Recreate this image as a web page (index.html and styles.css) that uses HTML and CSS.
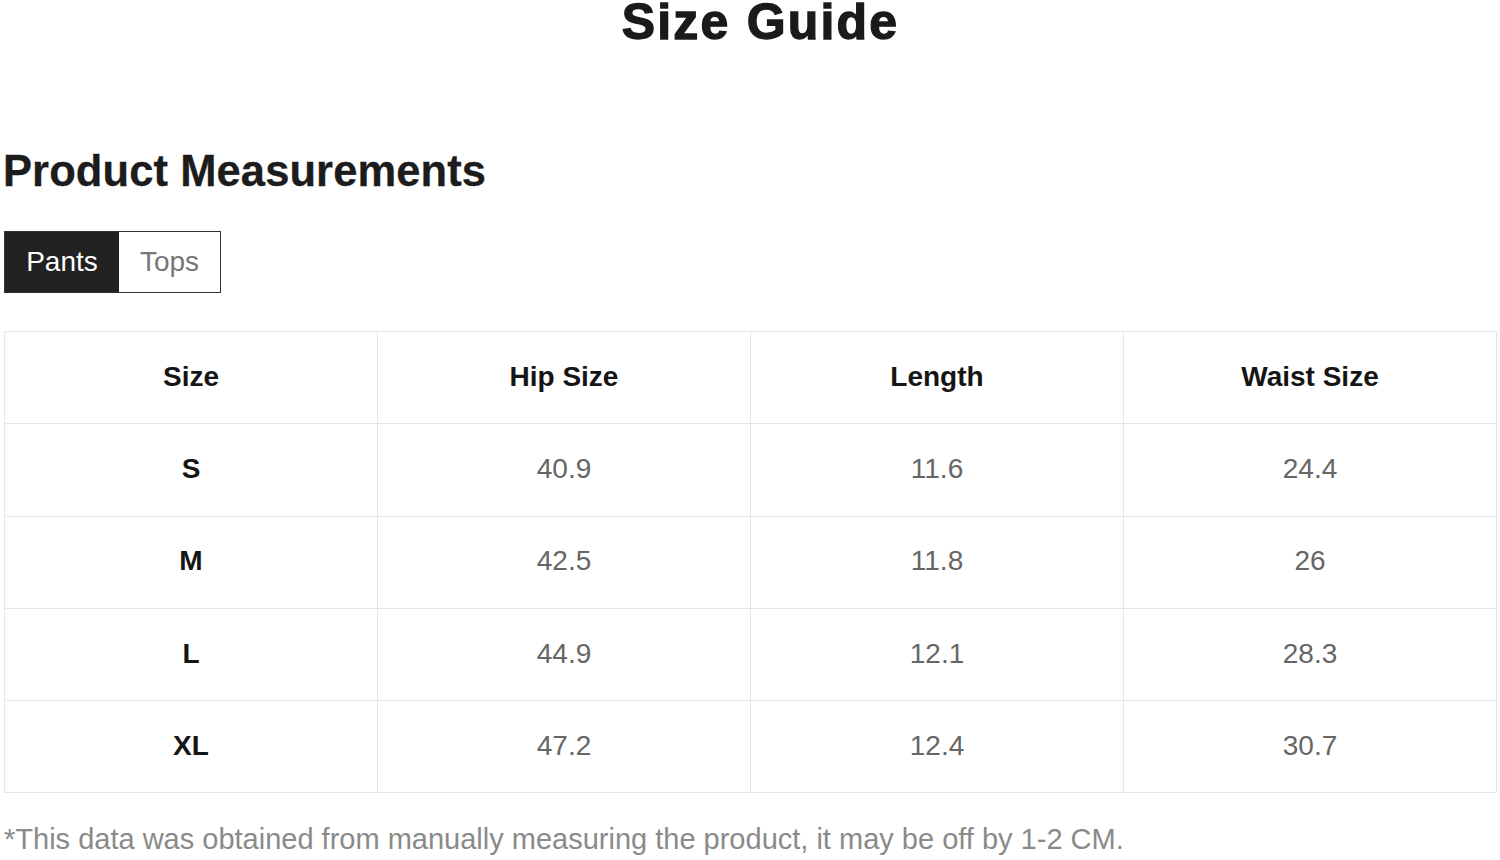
FILE: index.html
```html
<!DOCTYPE html>
<html lang="en">
<head>
<meta charset="utf-8">
<title>Size Guide</title>
<link rel="stylesheet" href="styles.css">
</head>
<body>
<main class="page">
  <h1 class="title">Size Guide</h1>
  <h2 class="section-title">Product Measurements</h2>
  <div class="tabs">
    <button class="tab tab-active">Pants</button>
    <button class="tab">Tops</button>
  </div>
  <table class="size-table">
    <thead>
      <tr><th>Size</th><th>Hip Size</th><th>Length</th><th>Waist Size</th></tr>
    </thead>
    <tbody>
      <tr><th>S</th><td>40.9</td><td>11.6</td><td>24.4</td></tr>
      <tr><th>M</th><td>42.5</td><td>11.8</td><td>26</td></tr>
      <tr><th>L</th><td>44.9</td><td>12.1</td><td>28.3</td></tr>
      <tr><th>XL</th><td>47.2</td><td>12.4</td><td>30.7</td></tr>
    </tbody>
  </table>
  <p class="note">*This data was obtained from manually measuring the product, it may be off by 1-2 CM.</p>
</main>
</body>
</html>
```
FILE: styles.css
```css
html, body {
  margin: 0;
  padding: 0;
  background: #fff;
}
body {
  font-family: "Liberation Sans", Arial, sans-serif;
  color: #1a1a1a;
  overflow: hidden;
}
.page {
  width: 1500px;
  height: 860px;
  padding: 0 3px 0 4px;
  box-sizing: border-box;
}
.title {
  margin: 0;
  padding: 1px 0 0 20px;
  font-size: 50px;
  line-height: 42px;
  height: 44px;
  font-weight: 700;
  text-align: center;
  letter-spacing: 2.2px;
  -webkit-text-stroke: 1.3px #1a1a1a;
  color: #1a1a1a;
}
.section-title {
  margin: 104.5px 0 0 -1px;
  font-size: 43.5px;
  line-height: 42px;
  font-weight: 700;
  color: #1c1c1c;
  letter-spacing: 0.1px;
  -webkit-text-stroke: 0.3px #1c1c1c;
}
.tabs {
  margin-top: 39.5px;
  display: inline-flex;
  border: 1px solid #333;
  height: 62px;
  box-sizing: border-box;
}
.tab {
  font-family: "Liberation Sans", Arial, sans-serif;
  font-size: 28px;
  border: 0;
  margin: 0;
  padding: 0;
  background: #fff;
  color: #777;
  display: flex;
  align-items: center;
  justify-content: center;
}
.tab-active {
  background: #222;
  color: #fff;
  width: 114px;
}
.tab + .tab {
  width: 101px;
}
.size-table {
  display: table;
  margin-top: 38px;
  width: 1493px;
  border-collapse: collapse;
  table-layout: fixed;
}
.size-table tr {
  height: 92.3px;
}
.size-table th,
.size-table td {
  border: 1px solid #e6e6e6;
  text-align: center;
  vertical-align: middle;
  font-size: 28px;
  padding: 0 0 2px 0;
}
.size-table th {
  font-weight: 700;
  color: #151515;
}
.size-table td {
  font-weight: 400;
  color: #666;
}
.note {
  margin: 32px 0 0 0;
  font-size: 29px;
  line-height: 29px;
  color: #8a8a8a;
}
```
